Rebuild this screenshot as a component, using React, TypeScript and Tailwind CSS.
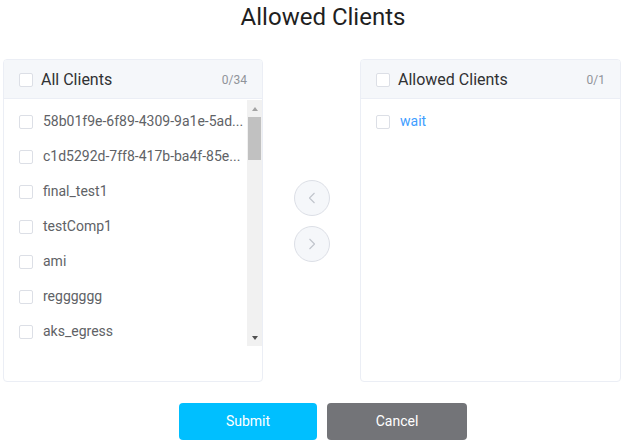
import React from "react";

const allClients = [
  "58b01f9e-6f89-4309-9a1e-5ad...",
  "c1d5292d-7ff8-417b-ba4f-85e...",
  "final_test1",
  "testComp1",
  "ami",
  "regggggg",
  "aks_egress",
];

function Checkbox() {
  return <span className="inline-block w-[14px] h-[14px] shrink-0 rounded-[2px] border border-[#dcdfe6] bg-white" />;
}

function PanelHeader({ title, count }: { title: string; count: string }) {
  return (
    <div className="h-[39px] flex items-center justify-between bg-[#f5f7fa] border-b border-[#ebeef5] pl-[15px] pr-[15px] pt-[1px]">
      <div className="flex items-center gap-[8px]">
        <Checkbox />
        <span className="text-[16px] text-[#303133]">{title}</span>
      </div>
      <span className="text-[12px] text-[#909399]">{count}</span>
    </div>
  );
}

function FakeScrollbar() {
  return (
    <div className="w-[15px] h-full bg-[#f1f1f1] flex flex-col items-center">
      <div className="h-[17px] w-full flex items-center justify-center">
        <span className="w-0 h-0 border-l-[3.5px] border-r-[3.5px] border-b-[4px] border-l-transparent border-r-transparent border-b-[#a3a3a3]" />
      </div>
      <div className="w-[13px] h-[43px] bg-[#c1c1c1]" />
      <div className="flex-1" />
      <div className="h-[17px] w-full flex items-center justify-center">
        <span className="w-0 h-0 border-l-[3.5px] border-r-[3.5px] border-t-[4px] border-l-transparent border-r-transparent border-t-[#505050]" />
      </div>
    </div>
  );
}

function Chevron({ dir }: { dir: "left" | "right" }) {
  return (
    <svg width="8" height="12" viewBox="0 0 8 12" fill="none">
      <polyline
        points={dir === "left" ? "6.5,1 1.5,6 6.5,11" : "1.5,1 6.5,6 1.5,11"}
        stroke="#c0c4cc"
        strokeWidth="1.1"
        strokeLinejoin="round"
      />
    </svg>
  );
}

export default function App() {
  return (
    <div className="w-full min-h-screen bg-white font-['Roboto',sans-serif]">
      <h1 className="pt-[3px] pl-[22px] text-center text-[24px] leading-[28px] font-normal text-[#1f1f1f]">
        Allowed Clients
      </h1>

      <div className="mt-[28px] pl-[3px] flex">
        {/* left panel */}
        <div className="w-[260px] h-[323px] rounded-[4px] border border-[#ebeef5] overflow-hidden bg-white">
          <PanelHeader title="All Clients" count="0/34" />
          <div className="pt-[1px] flex h-[247px]">
            <ul className="flex-1 min-w-0 pt-[4px] overflow-hidden">
              {allClients.map((c) => (
                <li key={c} className="h-[35px] flex items-center pl-[15px] pr-[4px] gap-[10px]">
                  <Checkbox />
                  <span className="whitespace-nowrap text-[14px] text-[#606266]">{c}</span>
                </li>
              ))}
            </ul>
            <FakeScrollbar />
          </div>
        </div>

        {/* transfer buttons */}
        <div className="w-[97px] flex flex-col items-center justify-center gap-[10px]">
          <button className="w-9 h-9 rounded-full border border-[#dcdfe6] bg-[#f5f7fa] flex items-center justify-center">
            <Chevron dir="left" />
          </button>
          <button className="w-9 h-9 rounded-full border border-[#dcdfe6] bg-[#f5f7fa] flex items-center justify-center">
            <Chevron dir="right" />
          </button>
        </div>

        {/* right panel */}
        <div className="w-[261px] h-[323px] rounded-[4px] border border-[#ebeef5] overflow-hidden bg-white">
          <PanelHeader title="Allowed Clients" count="0/1" />
          <ul className="pt-[5px]">
            <li className="h-[35px] flex items-center pl-[15px] gap-[10px]">
              <Checkbox />
              <span className="text-[14px] text-[#409eff]">wait</span>
            </li>
          </ul>
        </div>
      </div>

      <div className="mt-[21px] pl-[22px] flex justify-center gap-[10px]">
        <button className="w-[138px] h-[37px] rounded-[4px] bg-[#00bfff] text-white text-[14px]">
          Submit
        </button>
        <button className="w-[140px] h-[37px] rounded-[4px] bg-[#737478] text-white text-[14px]">
          Cancel
        </button>
      </div>
    </div>
  );
}
